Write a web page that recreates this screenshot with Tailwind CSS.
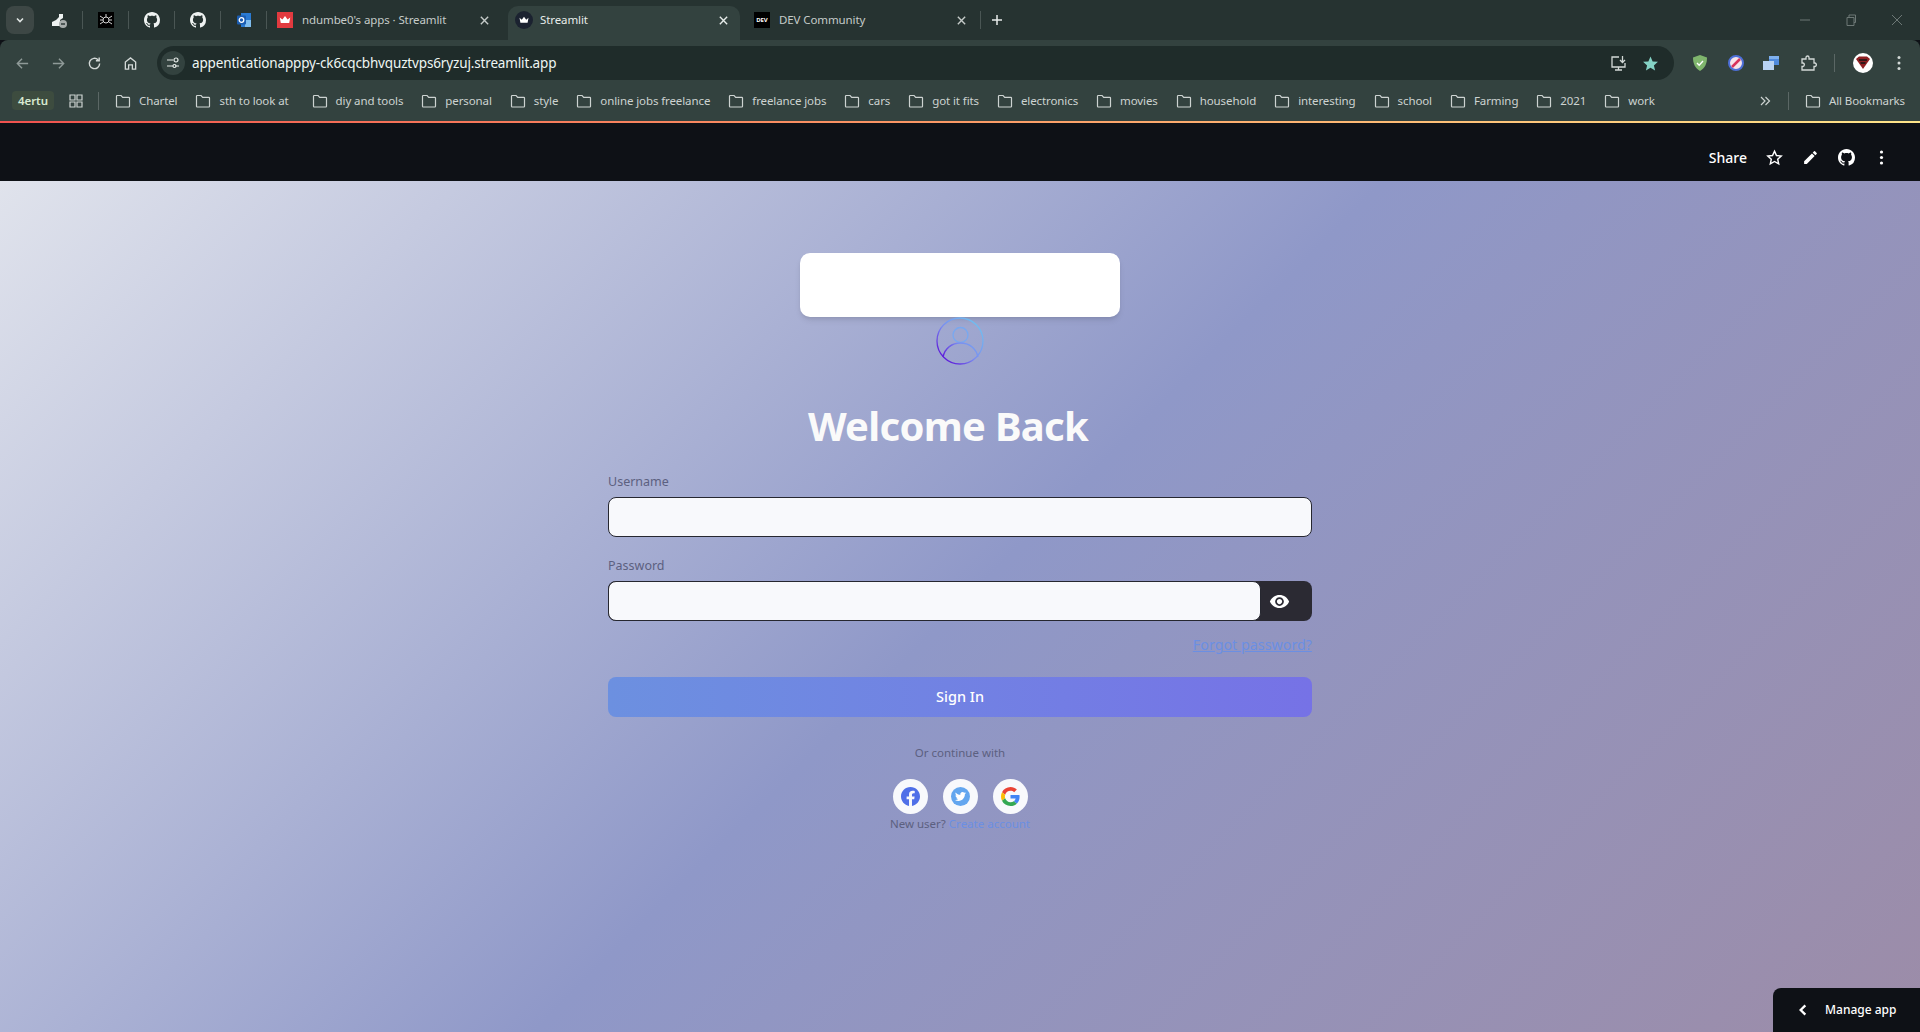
<!DOCTYPE html>
<html lang="en">
<head>
    <meta charset="UTF-8">
    <meta name="viewport" content="width=device-width, initial-scale=1.0">
    <title>Streamlit</title>
    <script src="https://cdn.jsdelivr.net/npm/@tailwindcss/browser@4"></script>
</head>
<body class="h-[1032px] w-[1920px] overflow-hidden flex flex-col bg-[#0e1116] font-['Noto_Sans',sans-serif]">
    <svg class="hidden">
        <symbol id="folder" viewBox="0 0 16 16"><path d="M1.5 3.2c0-.4.3-.7.7-.7h3.9l1.6 1.8h6.1c.4 0 .7.3.7.7v8.3c0 .4-.3.7-.7.7H2.2c-.4 0-.7-.3-.7-.7z" fill="none" stroke="currentColor" stroke-width="1.2"/></symbol>
        <symbol id="github" viewBox="0 0 16 16"><path fill="currentColor" d="M8 0C3.58 0 0 3.58 0 8c0 3.54 2.29 6.53 5.47 7.59.4.07.55-.17.55-.38 0-.19-.01-.82-.01-1.49-2.01.37-2.53-.49-2.69-.94-.09-.23-.48-.94-.82-1.13-.28-.15-.68-.52-.01-.53.63-.01 1.08.58 1.23.82.72 1.21 1.87.87 2.33.66.07-.52.28-.87.51-1.07-1.78-.2-3.64-.89-3.64-3.95 0-.87.31-1.59.82-2.15-.08-.2-.36-1.02.08-2.12 0 0 .67-.21 2.2.82.64-.18 1.32-.27 2-.27.68 0 1.36.09 2 .27 1.53-1.04 2.2-.82 2.2-.82.44 1.1.16 1.92.08 2.12.51.56.82 1.27.82 2.15 0 3.07-1.87 3.75-3.65 3.95.29.25.54.73.54 1.48 0 1.07-.01 1.93-.01 2.2 0 .21.15.46.55.38A8.013 8.013 0 0016 8c0-4.42-3.58-8-8-8z"/></symbol>
        <symbol id="close" viewBox="0 0 12 12"><path d="M2 2l8 8M10 2l-8 8" stroke="currentColor" stroke-width="1.5" fill="none"/></symbol>
        <symbol id="crown" viewBox="0 0 16 16"><path fill="currentColor" d="M2 5l3 2.5L8 3.5l3 4L14 5l-1.2 6.5H3.2z"/></symbol>
    </svg>

    <!-- Tab strip -->
    <div class="h-[40px] bg-[#263331] flex items-end pl-[6px] text-[11.5px] tracking-[-0.1px] shrink-0">
        <div class="w-[28px] h-[28px] mb-[6px] rounded-lg bg-[#3d4745] flex items-center justify-center text-[#dfe5e3]">
            <svg class="w-[12px] h-[12px]" viewBox="0 0 12 12"><path d="M3 4.5l3 3 3-3" stroke="currentColor" stroke-width="1.6" fill="none"/></svg>
        </div>
        <div class="flex items-center h-[34px] pb-[6px] ml-[16px] text-[#eef2f1]">
            <svg class="w-[18px] h-[18px]" viewBox="0 0 18 18"><path fill="currentColor" d="M2 15V11l4-2 3-3V3h4v4l-3 2v6z"/><circle cx="13" cy="13" r="4" fill="#a8adac"/><path d="M11 13h4" stroke="#263331" stroke-width="1.4"/></svg>
            <div class="w-px h-[18px] bg-[#4a5654] ml-[14px]"></div>
            <div class="w-[16px] h-[16px] bg-black ml-[15px] flex items-center justify-center">
                <svg class="w-[14px] h-[14px] text-[#d5d5d5]" viewBox="0 0 14 14"><circle cx="7" cy="7" r="3" fill="none" stroke="currentColor"/><path d="M1 3l3 2M13 3l-3 2M1 11l3-2M13 11l-3-2M7 1v3M1 7h3M13 7h-3" stroke="currentColor"/></svg>
            </div>
            <div class="w-px h-[18px] bg-[#4a5654] ml-[14px]"></div>
            <svg class="w-[16px] h-[16px] ml-[15px]"><use href="#github"/></svg>
            <div class="w-px h-[18px] bg-[#4a5654] ml-[14px]"></div>
            <svg class="w-[16px] h-[16px] ml-[15px]"><use href="#github"/></svg>
            <div class="w-px h-[18px] bg-[#4a5654] ml-[14px]"></div>
            <svg class="w-[16px] h-[16px] ml-[15px]" viewBox="0 0 16 16"><rect x="5" y="1" width="10" height="14" fill="#2a7ad2"/><rect x="9" y="8" width="6" height="7" fill="#7fbdee"/><rect x="1" y="3.500" width="9" height="9" rx="1" fill="#1a5cb0"/><circle cx="5.500" cy="8" r="2.300" fill="none" stroke="#fff" stroke-width="1.300"/></svg>
            <div class="w-px h-[18px] bg-[#4a5654] ml-[14px]"></div>
        </div>
        <div class="flex items-center h-[34px] pb-[6px] w-[241px] pl-[10px] text-[#c5cbc9]">
            <div class="w-[16px] h-[16px] bg-[#e23a3f] flex items-center justify-center shrink-0">
                <svg class="w-[14px] h-[14px] text-white"><use href="#crown"/></svg>
            </div>
            <span class="ml-[9px] w-[177px]">ndumbe0's apps · Streamlit</span>
            <svg class="w-[11px] h-[11px]"><use href="#close"/></svg>
        </div>
        <div class="flex items-center h-[34px] pb-[6px] w-[232px] pl-[7px] rounded-t-[10px] bg-[#33423f] text-[#e7ecea]">
            <div class="w-[18px] h-[18px] rounded-full bg-[#1b2230] flex items-center justify-center shrink-0">
                <svg class="w-[12px] h-[12px] text-white"><use href="#crown"/></svg>
            </div>
            <span class="ml-[7px] w-[178px]">Streamlit</span>
            <svg class="w-[11px] h-[11px]"><use href="#close"/></svg>
        </div>
        <div class="flex items-center h-[34px] pb-[6px] pl-[14px] text-[#c5cbc9]">
            <div class="w-[16px] h-[16px] bg-black text-white text-[6px] font-bold flex items-center justify-center shrink-0">DEV</div>
            <span class="ml-[9px] w-[177px]">DEV Community</span>
            <svg class="w-[11px] h-[11px]"><use href="#close"/></svg>
            <div class="w-px h-[18px] bg-[#4a5654] ml-[13px]"></div>
            <svg class="w-[14px] h-[14px] ml-[9px] text-[#e7ecea]" viewBox="0 0 14 14"><path d="M7 2v10M2 7h10" stroke="currentColor" stroke-width="1.5"/></svg>
        </div>
        <div class="ml-auto flex items-center h-[34px] pb-[6px] pr-[17px] gap-[34px] text-[#6d7876]">
            <svg class="w-[12px] h-[12px]" viewBox="0 0 12 12"><path d="M1 6h10" stroke="currentColor"/></svg>
            <svg class="w-[12px] h-[12px]" viewBox="0 0 12 12"><path d="M2 3.500h7v8H2zM4 3.500V1h6.500v7.500H9" fill="none" stroke="currentColor"/></svg>
            <svg class="w-[12px] h-[12px]" viewBox="0 0 12 12"><path d="M1 1l10 10M11 1L1 11" stroke="currentColor"/></svg>
        </div>
    </div>

    <!-- Address bar -->
    <div class="h-[40px] pt-[6px] bg-[#33423f] rounded-t-lg flex items-center shrink-0 text-[#8f9a98]">
        <div class="flex items-center w-[157px] pl-[15px] gap-[21px]">
            <svg class="w-[15px] h-[15px]" viewBox="0 0 16 16"><path d="M14 8H3M7.500 3L2.500 8l5 5" fill="none" stroke="currentColor" stroke-width="1.500"/></svg>
            <svg class="w-[15px] h-[15px]" viewBox="0 0 16 16"><path d="M2 8h11M8.500 3l5 5-5 5" fill="none" stroke="currentColor" stroke-width="1.500"/></svg>
            <svg class="w-[15px] h-[15px] text-[#d3d9d7]" viewBox="0 0 16 16"><path d="M13.500 8a5.500 5.500 0 11-1.700-4M13 1.500V5H9.500" fill="none" stroke="currentColor" stroke-width="1.500"/></svg>
            <svg class="w-[15px] h-[15px] text-[#d3d9d7]" viewBox="0 0 16 16"><path d="M2.500 14V6.500L8 2l5.500 4.500V14H10V9.500H6V14z" fill="none" stroke="currentColor" stroke-width="1.400"/></svg>
        </div>
        <div class="w-[1517px] h-[34px] rounded-full bg-[#1f2c2a] flex items-center pl-[4px] pr-[15px] text-[#e7ecea]">
            <div class="w-[24px] h-[24px] rounded-full bg-[#33423f] flex items-center justify-center">
                <svg class="w-[14px] h-[14px]" viewBox="0 0 14 14"><path d="M1 4h6M1 10h6M9 10h4" stroke="currentColor" stroke-width="1.200"/><circle cx="10" cy="4" r="2" fill="none" stroke="currentColor" stroke-width="1.200"/><circle cx="8.500" cy="10" r="1.500" fill="none" stroke="currentColor" stroke-width="1.200"/></svg>
            </div>
            <span class="ml-[7px] text-[13.5px] tracking-[-0.15px] text-[#eef6f3]">appenticationapppy-ck6cqcbhvquztvps6ryzuj.streamlit.app</span>
            <svg class="ml-auto w-[17px] h-[17px] text-[#d3d9d7]" viewBox="0 0 17 17"><path d="M9 2H2v10h13V8M5 15h7M8.500 12v3M12.500 1v6M10 5l2.500 2.500L15 5" fill="none" stroke="currentColor" stroke-width="1.300"/></svg>
            <svg class="ml-[15px] w-[17px] h-[17px] text-[#84d2c5]" viewBox="0 0 24 24"><path fill="currentColor" d="M12 2l3 7 7.500.7-5.700 5 1.700 7.300L12 18.100 5.500 22l1.700-7.300-5.700-5L9 9z"/></svg>
        </div>
        <div class="flex items-center pl-[17px]">
            <svg class="w-[18px] h-[18px]" viewBox="0 0 18 18"><path d="M9 1l7 2.500c0 6-2 10.500-7 13.500C4 14 2 9.500 2 3.500z" fill="#7fb56d"/><path d="M6 9l2.200 2.200L12 7" fill="none" stroke="#fff" stroke-width="1.400"/></svg>
            <svg class="ml-[18px] w-[18px] h-[18px]" viewBox="0 0 18 18"><circle cx="9" cy="9" r="7" fill="#f7e3ea" stroke="#4d6fd8" stroke-width="2"/><path d="M5 13l8-8" stroke="#d8315b" stroke-width="2.500"/></svg>
            <svg class="ml-[18px] w-[16px] h-[16px]" viewBox="0 0 16 16"><rect x="6" y="1" width="10" height="9" fill="#4f8ade"/><rect x="6" y="1" width="10" height="3" fill="#7fb0ee"/><rect x="0" y="6" width="11" height="9" fill="#b8d2f3"/></svg>
            <svg class="ml-[21px] w-[17px] h-[17px] text-[#d3d9d7]" viewBox="0 0 17 17"><path d="M2 4h4V2.500a1.500 1.500 0 013 0V4h5v4h1a1.800 1.800 0 010 3.500h-1V15H2v-3.500h1a1.800 1.800 0 000-3.500H2z" fill="none" stroke="currentColor" stroke-width="1.300"/></svg>
            <div class="w-px h-[18px] bg-[#5b6765] ml-[17px]"></div>
            <div class="ml-[18px] w-[20px] h-[20px] rounded-full bg-white flex items-center justify-center">
                <svg class="w-[16px] h-[14px]" viewBox="0 0 16 14"><path d="M1 3l3-2.500h8L15 3 8 13z" fill="#8f1f22"/><path d="M4 4h8M5.500 7h5" stroke="#161616" stroke-width="1.500"/></svg>
            </div>
            <svg class="ml-[24px] w-[4px] h-[16px] text-[#d3d9d7]" viewBox="0 0 4 16"><circle cx="2" cy="2.500" r="1.500" fill="currentColor"/><circle cx="2" cy="8" r="1.500" fill="currentColor"/><circle cx="2" cy="13.500" r="1.500" fill="currentColor"/></svg>
        </div>
    </div>

    <!-- Bookmarks bar -->
    <div class="h-[41px] bg-[#33423f] flex items-center shrink-0 pl-[12px] text-[11.5px] tracking-[-0.1px] text-[#cdd3d1]">
        <div class="w-[42px] h-[19px] rounded bg-[#3d4c3f] text-[#d8ead0] font-semibold flex items-center justify-center">4ertu</div>
        <svg class="ml-[15px] w-[14px] h-[14px]" viewBox="0 0 14 14"><path d="M1 1h5v5H1zM8 1h5v5H8zM1 8h5v5H1zM8 8h5v5H8z" fill="none" stroke="currentColor" stroke-width="1.200"/></svg>
        <div class="w-px h-[18px] bg-[#5b6765] ml-[15px]"></div>
        <div class="flex items-center gap-[18px] ml-[16px]">
            <span class="flex items-center gap-[8px]"><svg class="w-[16px] h-[16px]"><use href="#folder"/></svg>Chartel</span>
            <span class="flex items-center gap-[8px] mr-[5px]"><svg class="w-[16px] h-[16px]"><use href="#folder"/></svg>sth to look at</span>
            <span class="flex items-center gap-[8px]"><svg class="w-[16px] h-[16px]"><use href="#folder"/></svg>diy and tools</span>
            <span class="flex items-center gap-[8px]"><svg class="w-[16px] h-[16px]"><use href="#folder"/></svg>personal</span>
            <span class="flex items-center gap-[8px]"><svg class="w-[16px] h-[16px]"><use href="#folder"/></svg>style</span>
            <span class="flex items-center gap-[8px]"><svg class="w-[16px] h-[16px]"><use href="#folder"/></svg>online jobs freelance</span>
            <span class="flex items-center gap-[8px]"><svg class="w-[16px] h-[16px]"><use href="#folder"/></svg>freelance jobs</span>
            <span class="flex items-center gap-[8px]"><svg class="w-[16px] h-[16px]"><use href="#folder"/></svg>cars</span>
            <span class="flex items-center gap-[8px]"><svg class="w-[16px] h-[16px]"><use href="#folder"/></svg>got it fits</span>
            <span class="flex items-center gap-[8px]"><svg class="w-[16px] h-[16px]"><use href="#folder"/></svg>electronics</span>
            <span class="flex items-center gap-[8px]"><svg class="w-[16px] h-[16px]"><use href="#folder"/></svg>movies</span>
            <span class="flex items-center gap-[8px]"><svg class="w-[16px] h-[16px]"><use href="#folder"/></svg>household</span>
            <span class="flex items-center gap-[8px]"><svg class="w-[16px] h-[16px]"><use href="#folder"/></svg>interesting</span>
            <span class="flex items-center gap-[8px]"><svg class="w-[16px] h-[16px]"><use href="#folder"/></svg>school</span>
            <span class="flex items-center gap-[8px]"><svg class="w-[16px] h-[16px]"><use href="#folder"/></svg>Farming</span>
            <span class="flex items-center gap-[8px]"><svg class="w-[16px] h-[16px]"><use href="#folder"/></svg>2021</span>
            <span class="flex items-center gap-[8px]"><svg class="w-[16px] h-[16px]"><use href="#folder"/></svg>work</span>
        </div>
        <div class="ml-auto flex items-center pr-[15px]">
            <svg class="w-[12px] h-[12px]" viewBox="0 0 12 12"><path d="M2 2l4 4-4 4M6.500 2l4 4-4 4" fill="none" stroke="currentColor" stroke-width="1.200"/></svg>
            <div class="w-px h-[18px] bg-[#5b6765] ml-[17px]"></div>
            <span class="flex items-center gap-[8px] ml-[16px]"><svg class="w-[16px] h-[16px]"><use href="#folder"/></svg>All Bookmarks</span>
        </div>
    </div>

    <!-- Loading line -->
    <div class="h-[2px] shrink-0 bg-gradient-to-r from-[#f0524f] via-[#fb9a66] to-[#fde58a]"></div>

    <!-- Streamlit header -->
    <div class="h-[58px] pt-[10px] bg-[#0e1116] flex items-center justify-end shrink-0 pr-[36px] text-white">
        <span class="text-[14px] font-medium">Share</span>
        <svg class="ml-[19px] w-[17px] h-[17px]" viewBox="0 0 24 24"><path d="M12 3l2.800 6.200 6.700.7-5 4.500 1.400 6.600L12 17.600 6.100 21l1.400-6.600-5-4.500 6.700-.7z" fill="none" stroke="currentColor" stroke-width="2"/></svg>
        <svg class="ml-[19px] w-[17px] h-[17px]" viewBox="0 0 24 24"><path fill="currentColor" d="M3 17.250V21h3.750L17.810 9.940l-3.750-3.750zM20.710 7.040a1 1 0 000-1.410l-2.340-2.340a1 1 0 00-1.410 0l-1.830 1.830 3.750 3.750z"/></svg>
        <svg class="ml-[19px] w-[17px] h-[17px]"><use href="#github"/></svg>
        <svg class="ml-[24px] w-[5px] h-[15px]" viewBox="0 0 5 15"><circle cx="2.500" cy="2" r="1.600" fill="currentColor"/><circle cx="2.500" cy="7.500" r="1.600" fill="currentColor"/><circle cx="2.500" cy="13" r="1.600" fill="currentColor"/></svg>
    </div>

    <!-- Login page -->
    <main class="relative flex-1 flex flex-col items-center bg-[linear-gradient(135deg,#e0e3ec_0%,#8f98c8_50%,#9c8ca8_100%)]">
        <div class="w-[320px] h-[64px] mt-[72px] bg-white rounded-[10px] shadow-md"></div>
        <svg class="w-[48px] h-[48px]" viewBox="0 0 48 48">
            <defs><linearGradient id="ring" gradientUnits="userSpaceOnUse" x1="42" y1="6" x2="6" y2="42"><stop offset="0" stop-color="#6fc0f0"/><stop offset=".55" stop-color="#7a8cf0"/><stop offset="1" stop-color="#5a10d8"/></linearGradient></defs>
            <circle cx="24" cy="24" r="23" fill="none" stroke="url(#ring)" stroke-width="1.300"/>
            <circle cx="24.500" cy="18" r="7.500" fill="none" stroke="#78a8f0" stroke-width="1.300"/>
            <path d="M7 40c2-9 9-14 17.500-14S40 31 42 40" fill="none" stroke="url(#ring)" stroke-width="1.300"/>
        </svg>
        <h1 class="mt-[34px] pr-[24px] text-[40px] leading-[54px] font-bold tracking-[-0.7px] text-[#fafafa]">Welcome Back</h1>
        <div class="w-[704px] mt-[20px]">
            <label class="block text-[12.5px] leading-[18px] text-[#5c6080]" for="username">Username</label>
            <input id="username" type="text" class="block w-full h-[40px] mt-[6px] rounded-lg border-[1.5px] border-[#262730] bg-[#f8f9fc]">
            <label class="block mt-[20px] text-[12.5px] leading-[18px] text-[#5c6080]" for="password">Password</label>
            <div class="flex h-[40px] mt-[6px] rounded-lg bg-[#2b2a33]">
                <input id="password" type="password" class="block flex-1 rounded-lg border-[1.5px] border-[#262730] bg-[#f8f9fc]">
                <div class="w-[51px] pr-[14px] flex items-center justify-center text-white">
                    <svg class="w-[21px] h-[21px]" viewBox="0 0 24 24"><path fill="currentColor" d="M12 4.500C7 4.500 2.730 7.610 1 12c1.730 4.390 6 7.500 11 7.500s9.270-3.110 11-7.500c-1.730-4.390-6-7.500-11-7.500zM12 17c-2.760 0-5-2.240-5-5s2.240-5 5-5 5 2.240 5 5-2.240 5-5 5zm0-8c-1.660 0-3 1.340-3 3s1.340 3 3 3 3-1.340 3-3-1.340-3-3-3z"/></svg>
                </div>
            </div>
            <div class="text-right mt-[12px] leading-[22px]"><a href="#" class="text-[14.3px] text-[#6b8fe3] underline">Forgot password?</a></div>
            <button type="button" class="block w-full h-[40px] mt-[21px] rounded-lg bg-gradient-to-r from-[#6c90e0] to-[#7672e6] text-white text-[14.5px] font-medium">Sign In</button>
            <p class="mt-[27px] text-center text-[11.5px] leading-[18px] text-[#5c6080]">Or continue with</p>
            <div class="flex justify-center gap-[15px] mt-[17px]">
                <div class="w-[35px] h-[35px] rounded-full bg-[#f8f9fc] flex items-center justify-center">
                    <svg class="w-[19px] h-[19px]" viewBox="0 0 24 24"><path fill="#4f6fe8" d="M24 12.073c0-6.627-5.373-12-12-12s-12 5.373-12 12c0 5.990 4.388 10.954 10.125 11.854v-8.385H7.078v-3.470h3.047V9.430c0-3.007 1.792-4.669 4.533-4.669 1.312 0 2.686.235 2.686.235v2.953H15.830c-1.491 0-1.956.925-1.956 1.874v2.250h3.328l-.532 3.470h-2.796v8.385C19.612 23.027 24 18.062 24 12.073z"/></svg>
                </div>
                <div class="w-[35px] h-[35px] rounded-full bg-[#f8f9fc] flex items-center justify-center">
                    <svg class="w-[19px] h-[19px]" viewBox="0 0 24 24"><circle cx="12" cy="12" r="12" fill="#63a6ef"/><path fill="#fff" transform="translate(5 5) scale(.58)" d="M23.953 4.570a10 10 0 01-2.825.775 4.958 4.958 0 002.163-2.723c-.951.555-2.005.959-3.127 1.184a4.920 4.920 0 00-8.384 4.482C7.690 8.095 4.067 6.130 1.640 3.162a4.822 4.822 0 00-.666 2.475c0 1.710.870 3.213 2.188 4.096a4.904 4.904 0 01-2.228-.616v.060a4.923 4.923 0 003.946 4.827 4.996 4.996 0 01-2.212.085 4.936 4.936 0 004.604 3.417 9.867 9.867 0 01-6.102 2.105c-.390 0-.779-.023-1.170-.067a13.995 13.995 0 007.557 2.209c9.053 0 13.998-7.496 13.998-13.985 0-.210 0-.420-.015-.630A9.935 9.935 0 0024 4.590z"/></svg>
                </div>
                <div class="w-[35px] h-[35px] rounded-full bg-[#f8f9fc] flex items-center justify-center">
                    <svg class="w-[19px] h-[19px]" viewBox="0 0 48 48"><path fill="#EA4335" d="M24 9.500c3.540 0 6.710 1.220 9.210 3.600l6.850-6.850C35.900 2.380 30.470 0 24 0 14.620 0 6.510 5.380 2.560 13.220l7.980 6.190C12.430 13.720 17.740 9.500 24 9.500z"/><path fill="#4285F4" d="M46.980 24.550c0-1.570-.150-3.090-.380-4.550H24v9.020h12.940c-.580 2.960-2.260 5.480-4.780 7.180l7.730 6c4.510-4.180 7.090-10.360 7.090-17.650z"/><path fill="#FBBC05" d="M10.530 28.590c-.480-1.450-.760-2.990-.760-4.590s.270-3.140.760-4.590l-7.980-6.190C.920 16.460 0 20.120 0 24c0 3.880.920 7.540 2.560 10.780l7.970-6.190z"/><path fill="#34A853" d="M24 48c6.480 0 11.930-2.130 15.890-5.810l-7.730-6c-2.150 1.450-4.920 2.300-8.160 2.300-6.260 0-11.570-4.220-13.470-9.910l-7.980 6.190C6.510 42.620 14.620 48 24 48z"/></svg>
                </div>
            </div>
            <p class="mt-[1px] text-center text-[11.5px] leading-[18px] text-[#5c6080]">New user? <a href="#" class="text-[#6b8fe3]">Create account</a></p>
        </div>
        <!-- Manage app tab sits over the page corner -->
        <div class="absolute right-0 bottom-0 w-[147px] h-[44px] rounded-tl-lg bg-[#0e1116] flex items-center pl-[23px] text-white">
            <svg class="w-[14px] h-[14px]" viewBox="0 0 12 12"><path d="M8 2L4 6l4 4" fill="none" stroke="currentColor" stroke-width="2"/></svg>
            <span class="ml-[15px] text-[12px] font-medium">Manage app</span>
        </div>
    </main>
</body>
</html>
